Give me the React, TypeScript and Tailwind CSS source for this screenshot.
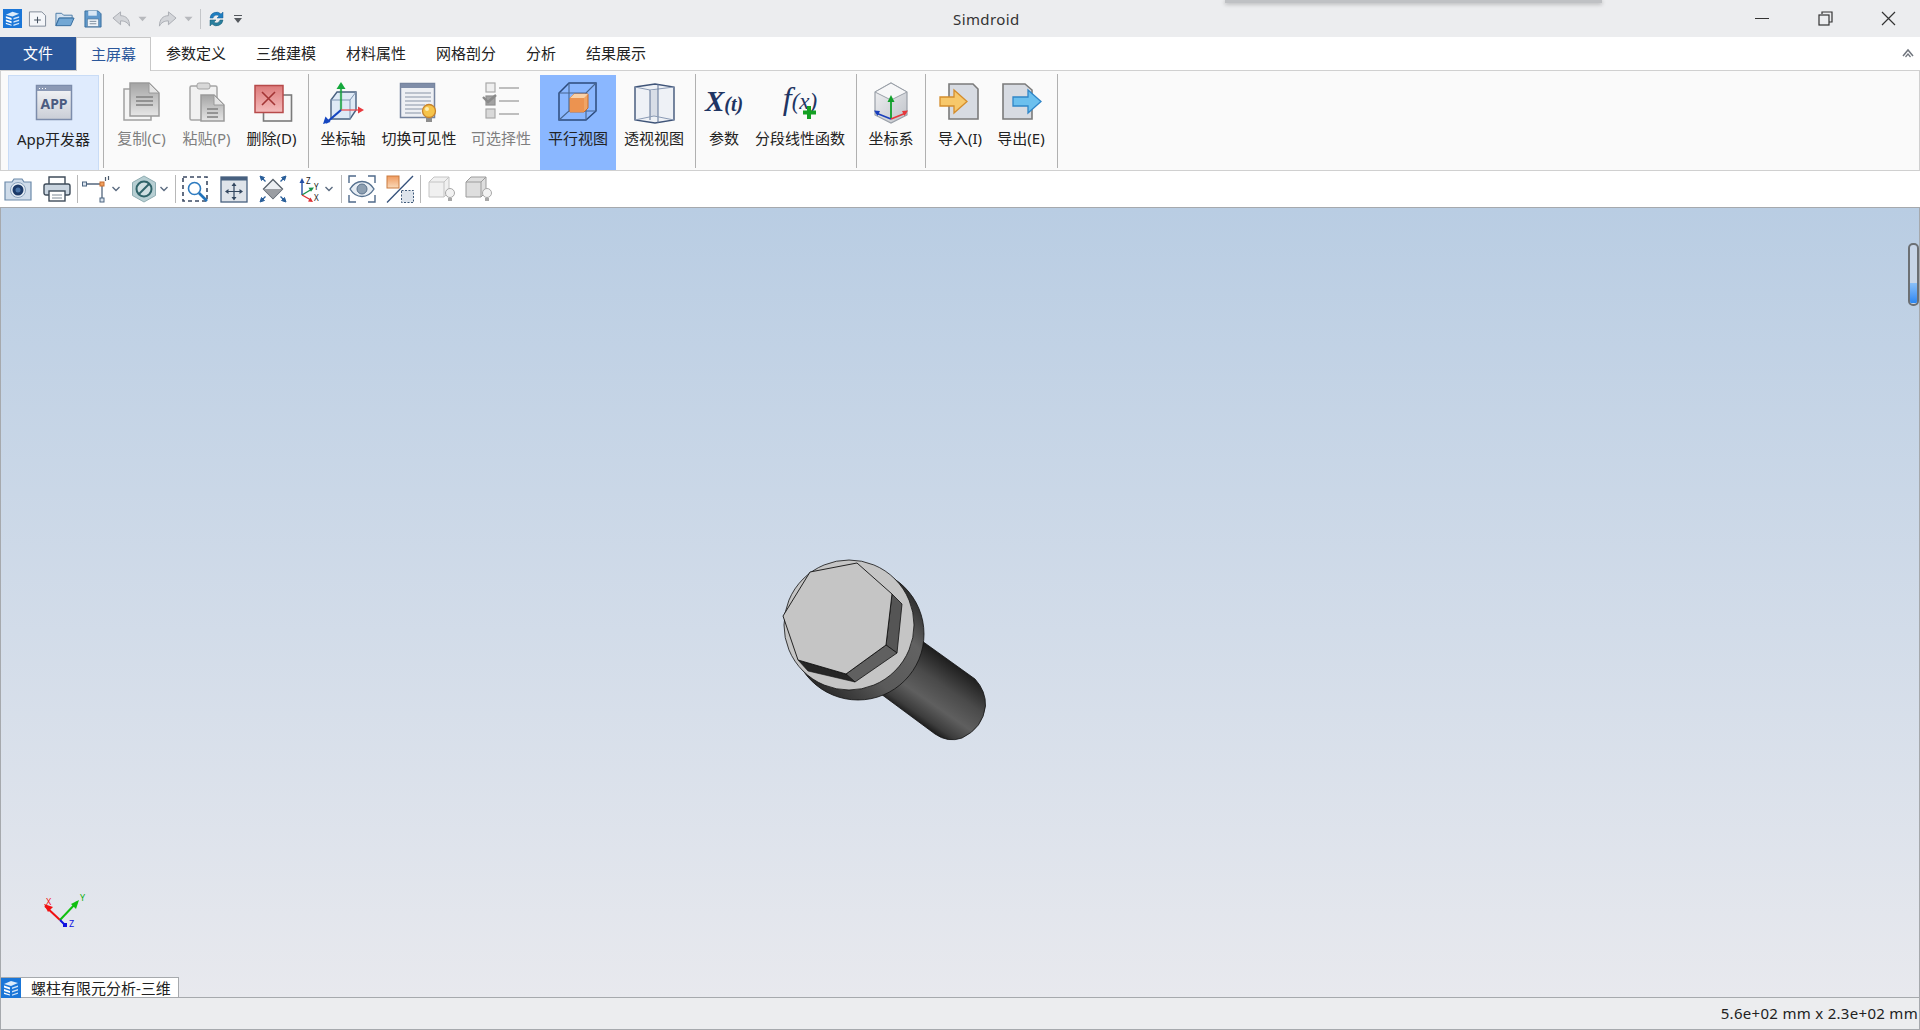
// App.tsx
import React from 'react';

const Logo: React.FC<{ size?: number }> = ({ size = 20 }) => (
  <svg width={size} height={size} viewBox="0 0 20 20">
    <rect width="20" height="20" fill="#1a76d8" />
    <path d="M3 6l7-3 7 2-7 3z" fill="#dcecfb" />
    <path d="M3 7.5l6 2v2l-6-2zM3 11l6 2v2l-6-2zM3 14.5l6 2v1l-6-1.6z" fill="#fff" />
    <path d="M11 9.5l6-2v1.6l-6 2zM11 13l6-2v1.6l-6 2zM11 16.4l6-2v1.4l-6 2z" fill="#cfe4fa" />
  </svg>
);

const Chevron: React.FC = () => (
  <svg width="10" height="8" viewBox="0 0 10 8">
    <path d="M1.5 2L5 5.5 8.5 2" fill="none" stroke="#5b6b80" strokeWidth="1.4" />
  </svg>
);

/* ---- quick access icons ---- */
const QatNew = () => (
  <svg width="20" height="20" viewBox="0 0 20 20">
    <path d="M1.5 2.5h13l4 4v11h-17z" fill="#f4f6f9" stroke="#7d8796" />
    <path d="M10 7.5v7M6.5 11h7" stroke="#44505f" strokeWidth="1.1" />
  </svg>
);
const QatOpen = () => (
  <svg width="21" height="20" viewBox="0 0 21 20">
    <path d="M1 4h6l2 2h9v3H4l-3 8z" fill="#d5e3f1" stroke="#4a7aa6" />
    <path d="M1 17l3.5-8H20l-3.5 8z" fill="#72a7d4" stroke="#356c9e" />
  </svg>
);
const QatSave = () => (
  <svg width="19" height="20" viewBox="0 0 19 20">
    <path d="M1 1.5h14l3 3v14H1z" fill="#5f98cb" stroke="#3a6f9f" />
    <rect x="4.500" y="1.500" width="9" height="5" fill="#d9e7f4" />
    <rect x="3.500" y="10" width="12" height="8" fill="#eef3f8" stroke="#54799b" strokeWidth=".7" />
    <path d="M6 12.5h7M6 15h7" stroke="#7a8a9b" />
  </svg>
);
const QatUndo: React.FC<{ flip?: boolean }> = ({ flip }) => (
  <svg width="20" height="18" viewBox="0 0 20 18" className={flip ? '-scale-x-100' : ''}>
    <path d="M1 8l8-6.5v4c6 0 9.500 4 9.500 11-2-4-5-5.500-9.500-5.500v4z" fill="#d3d5d9" stroke="#a9acb2" />
  </svg>
);
const QatDrop = () => (
  <svg width="10" height="6" viewBox="0 0 10 6">
    <path d="M0.500 0.500h9L5 5.500z" fill="#b7b9bd" />
  </svg>
);
const QatRefresh = () => (
  <svg width="17" height="18" viewBox="0 0 17 18">
    <path d="M2 8a6.500 6.500 0 0 1 11-4l2-2v6h-6l2-2a3.700 3.700 0 0 0-6 2z" fill="#1f7ec0" stroke="#1a5f94" strokeWidth=".5" />
    <path d="M15 10a6.500 6.500 0 0 1-11 4l-2 2v-6h6l-2 2a3.700 3.700 0 0 0 6-2z" fill="#2a7f9e" stroke="#1a5f74" strokeWidth=".5" />
  </svg>
);

/* ---- ribbon icons, all 44x44 ---- */
const AppIcon = () => (
  <svg width="44" height="44" viewBox="0 0 44 44">
    <defs>
      <linearGradient id="appg" x1="0" y1="0" x2="0" y2="1">
        <stop offset="0" stopColor="#f6f7f9" />
        <stop offset="1" stopColor="#c9cdd6" />
      </linearGradient>
    </defs>
    <rect x="4.500" y="4.500" width="35" height="34" fill="url(#appg)" stroke="#7c8cab" strokeWidth="1.500" />
    <rect x="5" y="5" width="34" height="5" fill="#8b99b5" />
    <path d="M7 7.500h1M10 7.500h1M13 7.500h1" stroke="#fff" />
    <text x="22" y="28" textAnchor="middle" fontSize="14" fontWeight="700" fill="#4b5b80" fontFamily="'Noto Sans',sans-serif">APP</text>
  </svg>
);
const Sheet: React.FC<{ x: number; y: number; w: number; h: number; id: string }> = ({ x, y, w, h, id }) => (
  <g>
    <defs>
      <linearGradient id={id} x1="0" y1="0" x2="0" y2="1">
        <stop offset="0" stopColor="#a4a4a4" />
        <stop offset="1" stopColor="#e6e6e6" />
      </linearGradient>
    </defs>
    <path d={`M${x} ${y}h${w - 10}l10 10v${h - 10}h-${w}z`} fill={`url(#${id})`} stroke="#9a9a9a" strokeWidth="1.500" />
    <path d={`M${x + w - 10} ${y}v10h10z`} fill="#e4e4e4" stroke="#9a9a9a" />
    <path d={`M${x + 6} ${y + 14}h${w - 12}M${x + 6} ${y + 18}h${w - 12}M${x + 6} ${y + 22}h${w - 12}`} stroke="#808080" strokeWidth="1.300" />
  </g>
);
const CopyIcon = () => (
  <svg width="44" height="44" viewBox="0 0 44 44">
    <rect x="4" y="9" width="27" height="31" fill="#f4f4f4" stroke="#a0a0a0" strokeWidth="1.500" />
    <Sheet x={10} y={3} w={29} h={33} id="copys" />
  </svg>
);
const PasteIcon = () => (
  <svg width="44" height="44" viewBox="0 0 44 44">
    <rect x="5" y="6" width="27" height="34" rx="1.500" fill="#f1f1f1" stroke="#a5a5a5" strokeWidth="1.500" />
    <rect x="12" y="3" width="13" height="6" rx="2" fill="#d8d8d8" stroke="#a3a3a3" />
    <Sheet x={16} y={15} w={23} h={26} id="pastes" />
  </svg>
);
const DeleteIcon = () => (
  <svg width="44" height="44" viewBox="0 0 44 44">
    <rect x="13.500" y="15" width="28" height="26" fill="#f6f6f6" stroke="#7b7b7b" strokeWidth="1.600" />
    <defs>
      <linearGradient id="delg" x1="0" y1="0" x2="0" y2="1">
        <stop offset="0" stopColor="#dc7a7a" />
        <stop offset="1" stopColor="#f4bcbc" />
      </linearGradient>
    </defs>
    <rect x="5" y="5.500" width="28" height="27" fill="url(#delg)" stroke="#b74a4a" strokeWidth="1.500" />
    <path d="M12 12l13 13M25 12L12 25" stroke="#a33535" strokeWidth="1.600" />
  </svg>
);
const AxesIcon = () => (
  <svg width="44" height="44" viewBox="0 0 44 44">
    <path d="M10 20l6-8h19v18l-6 9H10z" fill="#dfeaf6" stroke="#48607f" strokeWidth="1.400" />
    <path d="M10 20h19v19M29 20l6-8" fill="none" stroke="#7f95b2" />
    <path d="M20 30v-26" stroke="#19a23e" strokeWidth="2.200" opacity=".8" />
    <path d="M20 2l-4.500 7h9z" fill="#14a83c" />
    <path d="M20 30h18" stroke="#e9494e" strokeWidth="1.800" opacity=".7" />
    <path d="M43 30l-6-3.500v7z" fill="#e9393e" />
    <path d="M20 30L5 43" stroke="#1546c0" strokeWidth="2.200" />
    <path d="M2 44l2.500-7.500 5 5.500z" fill="#1546c0" />
  </svg>
);
const VisibilityIcon = () => (
  <svg width="44" height="44" viewBox="0 0 44 44">
    <rect x="3.500" y="3.500" width="34" height="34" fill="#eef0f4" stroke="#76849e" strokeWidth="1.500" />
    <rect x="4" y="4" width="33" height="4" fill="#7f8da8" />
    <path d="M8 13h26M8 17h26M8 21h26M8 25h20M8 29h18M8 33h16" stroke="#aab2c0" strokeWidth="1.300" />
    <path d="M29 37h6v5h-6z" fill="#8d8d8d" />
    <circle cx="32" cy="31" r="6.500" fill="#f6c44a" stroke="#c8832b" strokeWidth="1.300" />
    <circle cx="30" cy="29" r="2" fill="#fdeeb0" />
  </svg>
);
const SelectIcon = () => (
  <svg width="44" height="44" viewBox="0 0 44 44">
    <rect x="7" y="3" width="9" height="9" fill="#efefef" stroke="#a8a8a8" strokeWidth="1.200" />
    <rect x="7" y="16" width="9" height="9" fill="#a2a2a2" stroke="#909090" strokeWidth="1.200" />
    <rect x="7" y="29" width="9" height="9" fill="#d9d9d9" stroke="#a8a8a8" strokeWidth="1.200" />
    <path d="M4 17l5 5 8-7" fill="none" stroke="#8a8a8a" strokeWidth="2.400" />
    <path d="M20 8h20M20 21h20M20 34h20" stroke="#aaaaaa" strokeWidth="1.500" />
  </svg>
);
const ParallelIcon = () => (
  <svg width="44" height="44" viewBox="0 0 44 44">
    <path d="M3 13l10-10h27v28L30 40H3z" fill="none" stroke="#2c4b7c" strokeWidth="1.500" />
    <path d="M3 13h27v27M30 13L40 3M3 40l10-9V3M13 31h27" fill="none" stroke="#47658f" strokeWidth="1.100" />
    <path d="M14 18l4-4h14v14l-4 4H14z" fill="#f0a465" stroke="#c96e2b" />
    <path d="M14 18h14v14H14z" fill="#ec9350" />
    <path d="M14 18l4-4h14l-4 4z" fill="#f9d1a8" />
  </svg>
);
const PerspectiveIcon = () => (
  <svg width="44" height="44" viewBox="0 0 44 44">
    <path d="M3 7l20-3 19 3v33l-19 3-20-3z" fill="#eef1f6" stroke="#3f5478" strokeWidth="1.400" />
    <path d="M3 7l15 3 24-3" fill="none" stroke="#8a9ab4" />
    <path d="M18 10h8v26h-8z" fill="#d8dde7" />
    <path d="M26 4v39M18 10v30" stroke="#5d7193" strokeWidth="1" />
    <path d="M3 40l19-4 20 4" fill="none" stroke="#8a9ab4" />
  </svg>
);
const XtIcon = () => (
  <svg width="44" height="44" viewBox="0 0 44 44">
    <text x="22" y="31" textAnchor="middle" fontFamily="'Liberation Serif',serif" fontStyle="italic" fontWeight="700" fill="#1f3563">
      <tspan fontSize="29">X</tspan>
      <tspan fontSize="20">(t)</tspan>
    </text>
  </svg>
);
const FxIcon = () => (
  <svg width="44" height="44" viewBox="0 0 44 44">
    <text x="22" y="29" textAnchor="middle" fontFamily="'Liberation Serif',serif" fontStyle="italic" fill="#1f3563">
      <tspan fontSize="32">f</tspan>
      <tspan fontSize="23">(x)</tspan>
    </text>
    <path d="M31 26v13M25 32.500h13" stroke="#14a023" strokeWidth="4" />
  </svg>
);
const CoordIcon = () => (
  <svg width="44" height="44" viewBox="0 0 44 44">
    <defs>
      <linearGradient id="cogl" x1="0" y1="0" x2="1" y2="1">
        <stop offset="0" stopColor="#f2f2f4" />
        <stop offset="1" stopColor="#bfc3c9" />
      </linearGradient>
    </defs>
    <path d="M22 3l16 9v23l-16 8-16-8V12z" fill="url(#cogl)" stroke="#9aa0a8" strokeWidth="1.200" />
    <path d="M6 12l16 8 16-8-16-9z" fill="#f7f7f8" stroke="#9aa0a8" />
    <path d="M22 39V20" stroke="#10a02a" strokeWidth="1.800" />
    <path d="M22 15l-3.500 7h7z" fill="#10a02a" />
    <path d="M22 39l-15-6" stroke="#1a3fbb" strokeWidth="1.800" />
    <path d="M5 30.500l6 .5-2.500 5z" fill="#1a3fbb" />
    <path d="M22 39l15-6" stroke="#e5383c" strokeWidth="1.800" />
    <path d="M39 30.500l-6 .5 2.500 5z" fill="#e5383c" />
  </svg>
);
const ImportIcon = () => (
  <svg width="44" height="44" viewBox="0 0 44 44">
    <path d="M11 4h24l5 5v30H11z" fill="#d7dbe2" stroke="#7b7b7b" strokeWidth="1.600" />
    <path d="M2 17h14v-7l13 11.500L16 33v-7H2z" fill="#f7c86b" stroke="#d48d2c" strokeWidth="1.300" />
  </svg>
);
const ExportIcon = () => (
  <svg width="44" height="44" viewBox="0 0 44 44">
    <path d="M4 4h22l7 6v29H4z" fill="#d7dbe2" stroke="#7b7b7b" strokeWidth="1.600" />
    <path d="M14 17h15v-7l13 11.500L29 33v-7H14z" fill="#6cc0ee" stroke="#2f86c8" strokeWidth="1.300" />
  </svg>
);

/* ---- view toolbar icons ---- */
const CameraIcon = () => (
  <svg width="28" height="28" viewBox="0 0 28 28">
    <path d="M1 7h7l2-3h8l2 3h7v18H1z" fill="#cfdcea" stroke="#6c8aaa" strokeWidth="1.200" />
    <circle cx="14" cy="15" r="7.500" fill="#e7eef5" stroke="#8aa2bc" />
    <circle cx="14" cy="15" r="5.500" fill="#1c3a68" />
    <circle cx="14" cy="15" r="2.500" fill="#4a74a8" />
  </svg>
);
const PrinterIcon = () => (
  <svg width="28" height="28" viewBox="0 0 28 28">
    <path d="M6 9V2h16v7" fill="#fff" stroke="#3f4c5a" strokeWidth="1.400" />
    <rect x="1" y="9" width="26" height="11" rx="2" fill="#cad5e0" stroke="#3f4c5a" strokeWidth="1.400" />
    <rect x="6" y="16" width="16" height="10" fill="#fff" stroke="#3f4c5a" strokeWidth="1.400" />
    <path d="M9 20h10M9 23h10" stroke="#7f8a96" />
  </svg>
);
const PickIcon = () => (
  <svg width="30" height="28" viewBox="0 0 30 28">
    <path d="M5 9h17M21 9v16" stroke="#54677d" strokeWidth="1.300" />
    <rect x="1.500" y="7" width="4" height="4" fill="#dbe4ee" stroke="#4b6480" />
    <rect x="19" y="23" width="4" height="4" fill="#dbe4ee" stroke="#4b6480" />
    <rect x="19" y="7" width="4" height="4" fill="#f0a060" stroke="#c76d2d" />
    <path d="M24.500 2v4M27.500 1v4" stroke="#4b5a6c" strokeWidth="1.200" />
  </svg>
);
const HexIcon = () => (
  <svg width="26" height="28" viewBox="0 0 26 28">
    <path d="M13 1l11.500 6.500v13L13 27 1.500 20.500v-13z" fill="#b7cfd3" stroke="#8fadb2" />
    <circle cx="13" cy="14" r="7.500" fill="#cfdfe2" stroke="#2f6369" strokeWidth="2" />
    <path d="M8 19L18 9" stroke="#2f6369" strokeWidth="2" />
  </svg>
);
const ZoomBoxIcon = () => (
  <svg width="28" height="28" viewBox="0 0 28 28">
    <rect x="1" y="2" width="24" height="24" fill="none" stroke="#3b4a63" strokeWidth="1.600" strokeDasharray="4 3" />
    <circle cx="12.500" cy="13.500" r="6" fill="#fff" stroke="#2d7bc0" strokeWidth="1.600" />
    <path d="M17 18l8 8" stroke="#2173bb" strokeWidth="2.600" />
  </svg>
);
const FitIcon = () => (
  <svg width="28" height="28" viewBox="0 0 28 28">
    <rect x="1" y="2" width="26" height="25" fill="#dfe4ea" stroke="#47607f" strokeWidth="1.300" />
    <rect x="1" y="2" width="26" height="3.500" fill="#47607f" />
    <path d="M14 9v15M6.500 16.500h15" stroke="#33475f" strokeWidth="1.200" />
    <path d="M14 7.500l-2.500 3.500h5zM14 25.500l-2.500-3.500h5zM5 16.500l3.500-2.500v5zM23 16.500l-3.500-2.500v5z" fill="#33475f" />
  </svg>
);
const DiamondIcon = () => (
  <svg width="28" height="28" viewBox="0 0 28 28">
    <path d="M14 4.500L23.500 14 14 23.500 4.500 14z" fill="#eceff2" stroke="#57606a" strokeWidth="1.300" />
    <path d="M14 14l9.500 0L14 23.500 4.500 14z" fill="#9a9da2" />
    <path d="M1 1l4.500 1.500L2.500 5.500zM27 1l-4.500 1.500 3 3zM1 27l4.500-1.500-3-3zM27 27l-4.500-1.500 3-3z" fill="#2a5f9a" stroke="#2a5f9a" />
    <path d="M2.500 2.500l4 4M25.500 2.500l-4 4M2.500 25.500l4-4M25.500 25.500l-4-4" stroke="#2a5f9a" strokeWidth="1.300" />
  </svg>
);
const TriadIcon = () => (
  <svg width="26" height="30" viewBox="0 0 26 30">
    <path d="M6 21V7" stroke="#234ea6" strokeWidth="1.400" />
    <path d="M6 4L3.500 9h5z" fill="#234ea6" />
    <path d="M6 21l10-6" stroke="#17904a" strokeWidth="1.400" />
    <path d="M18 13.500l-5.500.3 2.500 4z" fill="#17904a" />
    <path d="M6 21l9 5" stroke="#dd2f33" strokeWidth="1.400" />
    <path d="M17 28l-2.500-4.500-2.500 4z" fill="#dd2f33" />
    <text x="10" y="10" fontSize="8" fill="#222" fontFamily="'Noto Sans',sans-serif">Z</text>
    <text x="18" y="16" fontSize="8" fill="#222" fontFamily="'Noto Sans',sans-serif">Y</text>
    <text x="18" y="27" fontSize="8" fill="#222" fontFamily="'Noto Sans',sans-serif">X</text>
  </svg>
);
const EyeIcon = () => (
  <svg width="28" height="28" viewBox="0 0 28 28">
    <path d="M1 8V1h7M20 1h7v7M1 20v7h7M20 27h7v-7" fill="none" stroke="#4f6a8a" strokeWidth="1.400" />
    <path d="M2 14c4-6.500 8-7.500 12-7.500S22 7.500 26 14c-4 6.500-8 7.500-12 7.500S6 20.500 2 14z" fill="#e7edf3" stroke="#56718f" strokeWidth="1.400" />
    <circle cx="14" cy="14" r="5" fill="#8d9fb1" stroke="#5a728c" />
  </svg>
);
const HalfIcon = () => (
  <svg width="28" height="28" viewBox="0 0 28 28">
    <defs>
      <linearGradient id="halfg" x1="0" y1="0" x2="0" y2="1">
        <stop offset="0" stopColor="#f09a5e" />
        <stop offset="1" stopColor="#f9d9b9" />
      </linearGradient>
    </defs>
    <rect x="1" y="1" width="12" height="12" fill="url(#halfg)" stroke="#c97a3f" />
    <rect x="15.500" y="15.500" width="12" height="12" fill="#dde4ec" stroke="#3f5a7a" strokeDasharray="2 1.500" />
    <path d="M1 27.500L27 1" stroke="#33507a" strokeWidth="1.300" />
  </svg>
);
const CubeBulbIcon: React.FC<{ shade: string; edge: string }> = ({ shade, edge }) => (
  <svg width="28" height="28" viewBox="0 0 28 28">
    <path d="M1 7l5-5h15v15l-5 5H1z" fill={shade} stroke={edge} />
    <path d="M1 7h15v15M16 7l5-5" fill="none" stroke={edge} />
    <circle cx="22" cy="18" r="4.500" fill="#f2f2f2" stroke="#a8a8a8" />
    <path d="M20 23h4v3h-4z" fill="#a8a8a8" />
  </svg>
);

const Sep: React.FC<{ className?: string }> = ({ className }) => (
  <div className={'h-[94px] w-px self-center bg-[#b0b0b0] ' + (className ?? '')} />
);

type RibbonItem = { label: string; w: string; icon: React.ReactNode; off?: boolean; active?: boolean };

const RibbonButton: React.FC<RibbonItem> = ({ label, w, icon, off, active }) => (
  <button
    type="button"
    className={
      'flex h-full shrink-0 flex-col items-center pt-[5px] ' +
      w +
      (active ? ' bg-[#8ab7ff]' : '')
    }
  >
    <span className="flex h-[44px] items-center justify-center">{icon}</span>
    <span className={'mt-[4px] whitespace-nowrap text-[15px] leading-[20px] ' + (off ? 'text-[#7f7f7f]' : 'text-[#222]')}>
      {label}
    </span>
  </button>
);

const tabs = [
  { label: '参数定义', w: 'w-[90px]' },
  { label: '三维建模', w: 'w-[90px]' },
  { label: '材料属性', w: 'w-[90px]' },
  { label: '网格剖分', w: 'w-[90px]' },
  { label: '分析', w: 'w-[60px]' },
  { label: '结果展示', w: 'w-[90px]' },
];

const ToolSep: React.FC<{ className: string }> = ({ className }) => (
  <div className={'h-[28px] w-px bg-[#b8b8b8] ' + className} />
);

const Bolt = () => (
  <svg width="270" height="240" viewBox="0 0 270 240" className="absolute left-[739px] top-[323px]">
    <defs>
      <linearGradient id="shaft" gradientUnits="userSpaceOnUse" x1="208" y1="128" x2="168" y2="186">
        <stop offset="0" stopColor="#1d1d1d" />
        <stop offset="0.35" stopColor="#4a4a4a" />
        <stop offset="0.65" stopColor="#5f5f5f" />
        <stop offset="0.88" stopColor="#3c3c3c" />
        <stop offset="1" stopColor="#161616" />
      </linearGradient>
      <linearGradient id="flange" gradientUnits="userSpaceOnUse" x1="172" y1="60" x2="70" y2="165">
        <stop offset="0" stopColor="#2a2a2a" />
        <stop offset="0.25" stopColor="#626262" />
        <stop offset="0.6" stopColor="#5a5a5a" />
        <stop offset="1" stopColor="#1e1e1e" />
      </linearGradient>
    </defs>
    <path
      d="M182 110L235 148Q246 160 245.500 175Q243 197 222 207Q208 212 195 203L141 163Z"
      fill="url(#shaft)"
      stroke="#111"
      strokeWidth=".8"
    />
    <circle cx="118" cy="103" r="66" fill="url(#flange)" stroke="#111" strokeWidth=".8" />
    <circle cx="109" cy="94" r="65" fill="#c5c5c5" stroke="#111" strokeWidth=".8" />
    <path d="M152 63l10 10-5 49-11-8z" fill="#555" stroke="#111" strokeWidth=".8" />
    <path d="M146 114l11 8-42 29-9-8z" fill="#606060" stroke="#111" strokeWidth=".8" />
    <path d="M58 129l48 14 9 8-47-11z" fill="#262626" stroke="#111" strokeWidth=".6" />
    <path d="M70 41l47-9 35 31-6 51-40 29-48-14-15-44z" fill="#c5c5c5" stroke="#111" strokeWidth=".9" />
  </svg>
);

const Triad = () => (
  <svg width="70" height="50" viewBox="0 0 70 50" className="absolute left-[30px] top-[682px]" fontFamily="'Noto Sans',sans-serif">
    <path d="M29 30L14 16" stroke="#f01010" strokeWidth="2" />
    <path d="M13 14l9 3-5 5z" fill="#f01010" />
    <path d="M29 30L46 12" stroke="#10c010" strokeWidth="2" />
    <path d="M48 10l-3 9-5-5z" fill="#10c010" />
    <path d="M29 30l5 5" stroke="#1010e0" strokeWidth="2" />
    <rect x="32" y="33" width="4" height="4" fill="#1010e0" />
    <text x="15" y="15" fontSize="9" fill="#f01010">X</text>
    <text x="49" y="11" fontSize="9" fill="#10b010">Y</text>
    <text x="38" y="37" fontSize="9" fill="#1010e0">Z</text>
  </svg>
);

export default function App() {
  return (
    <main className="relative flex h-screen w-full flex-col overflow-hidden bg-white font-['Noto_Sans','Noto_Sans_CJK_SC',sans-serif] text-[#222]">
      {/* Title bar */}
      <header className="relative flex h-[37px] shrink-0 items-center bg-[#ecedef]">
        <div className="absolute left-[1225px] top-0 h-[3px] w-[377px] bg-[#bfc1c4] shadow-[0_1px_4px_rgba(0,0,0,0.3)]" />
        <div className="flex items-center pl-[3px]">
          <Logo size={19} />
          <span className="ml-[6px] flex w-[19px] justify-center"><QatNew /></span>
          <span className="ml-[8px] flex w-[20px] justify-center"><QatOpen /></span>
          <span className="ml-[9px] flex w-[18px] justify-center"><QatSave /></span>
          <span className="ml-[10px] flex w-[19px] justify-center"><QatUndo /></span>
          <span className="ml-[7px] flex w-[9px] justify-center"><QatDrop /></span>
          <span className="ml-[11px] flex w-[19px] justify-center"><QatUndo flip /></span>
          <span className="ml-[7px] flex w-[9px] justify-center"><QatDrop /></span>
          <div className="ml-[7px] h-[20px] w-px bg-[#c4c6c9]" />
          <span className="ml-[7px] flex w-[17px] justify-center"><QatRefresh /></span>
          <span className="ml-[8px] flex w-[10px] flex-col items-center gap-[2px]">
            <span className="h-px w-[8px] bg-[#55595e]" />
            <span className="h-0 w-0 border-x-[4px] border-t-[5px] border-x-transparent border-t-[#55595e]" />
          </span>
        </div>
        <span className="absolute left-[953px] top-[8px] text-[15px] leading-[22px] tracking-[0.4px] text-[#333]">Simdroid</span>
        <div className="ml-auto flex h-full items-center">
          <button type="button" className="flex h-full w-[63px] items-center justify-center pr-[1px]">
            <span className="h-[1.500px] w-[14px] bg-[#333]" />
          </button>
          <button type="button" className="flex h-full w-[63px] items-center justify-center pr-[1px]">
            <svg width="15" height="15" viewBox="0 0 15 15">
              <path d="M4 3V1h10v10h-3" fill="none" stroke="#333" strokeWidth="1.200" />
              <rect x="1" y="4" width="10" height="10" fill="none" stroke="#333" strokeWidth="1.200" />
            </svg>
          </button>
          <button type="button" className="flex h-full w-[63px] items-center justify-center">
            <svg width="15" height="15" viewBox="0 0 15 15">
              <path d="M1 1l13 13M14 1L1 14" stroke="#333" strokeWidth="1.200" />
            </svg>
          </button>
        </div>
      </header>

      {/* Tabs */}
      <nav className="relative z-10 flex h-[33px] shrink-0 bg-white text-[15px]">
        <div className="flex w-[76px] items-center justify-center bg-[#2b579a] text-white">文件</div>
        <div className="-mb-px flex h-[34px] w-[75px] items-center justify-center border-x border-t border-[#c8c8c8] bg-[#fafafa] text-[#2b579a]">主屏幕</div>
        {tabs.map(t => (
          <div key={t.label} className={'flex items-center justify-center text-[#222] ' + t.w}>{t.label}</div>
        ))}
        <svg width="12" height="10" viewBox="0 0 12 10" className="ml-auto mr-[6px] mt-[11px]">
          <path d="M1 8l5-6 5 6" fill="none" stroke="#71767e" strokeWidth="1.500" />
          <path d="M3.500 9L6 6l2.500 3" fill="none" stroke="#71767e" strokeWidth="1.200" />
        </svg>
      </nav>

      {/* Ribbon */}
      <section className="flex h-[101px] shrink-0 items-stretch border border-[#d0d0d0] bg-[#fafafa] pt-[4px]">
        <div className="ml-[7px] shrink-0">
          <div className="h-full w-[91px] border border-b-0 border-[#c9dcf6] bg-[#dfebfd]">
            <RibbonButton label="App开发器" w="w-full" icon={<AppIcon />} />
          </div>
        </div>
        <Sep className="ml-[4px] -mt-[4px]" />
        <div className="ml-[5px] flex">
          <RibbonButton label="复制(C)" w="w-[65px]" off icon={<CopyIcon />} />
          <RibbonButton label="粘贴(P)" w="w-[65px]" off icon={<PasteIcon />} />
          <RibbonButton label="删除(D)" w="w-[65px]" icon={<DeleteIcon />} />
        </div>
        <Sep className="ml-[4px] -mt-[4px]" />
        <div className="ml-px flex">
          <RibbonButton label="坐标轴" w="w-[66px]" icon={<AxesIcon />} />
          <RibbonButton label="切换可见性" w="w-[86px]" icon={<VisibilityIcon />} />
          <RibbonButton label="可选择性" w="w-[78px]" off icon={<SelectIcon />} />
          <RibbonButton label="平行视图" w="w-[76px]" active icon={<ParallelIcon />} />
          <RibbonButton label="透视视图" w="w-[76px]" icon={<PerspectiveIcon />} />
        </div>
        <Sep className="ml-[3px] -mt-[4px]" />
        <div className="flex">
          <RibbonButton label="参数" w="w-[56px]" icon={<XtIcon />} />
          <RibbonButton label="分段线性函数" w="w-[96px]" icon={<FxIcon />} />
        </div>
        <Sep className="ml-[8px] -mt-[4px]" />
        <RibbonButton label="坐标系" w="w-[68px]" icon={<CoordIcon />} />
        <Sep className="-mt-[4px]" />
        <div className="ml-px flex">
          <RibbonButton label="导入(I)" w="w-[66px]" icon={<ImportIcon />} />
          <RibbonButton label="导出(E)" w="w-[56px]" icon={<ExportIcon />} />
        </div>
        <Sep className="ml-[8px] -mt-[4px]" />
      </section>

      {/* View toolbar */}
      <div className="flex h-[36px] shrink-0 items-center bg-white pl-[4px]">
        <CameraIcon />
        <span className="ml-[11px]"><PrinterIcon /></span>
        <ToolSep className="ml-[6px]" />
        <span className="ml-[3px]"><PickIcon /></span>
        <Chevron />
        <span className="ml-[10px]"><HexIcon /></span>
        <span className="ml-[2px]"><Chevron /></span>
        <ToolSep className="ml-[6px]" />
        <span className="ml-[6px]"><ZoomBoxIcon /></span>
        <span className="ml-[10px]"><FitIcon /></span>
        <span className="ml-[11px]"><DiamondIcon /></span>
        <span className="ml-[9px]"><TriadIcon /></span>
        <span className="ml-[2px]"><Chevron /></span>
        <ToolSep className="ml-[7px]" />
        <span className="ml-[6px]"><EyeIcon /></span>
        <span className="ml-[10px]"><HalfIcon /></span>
        <ToolSep className="ml-[6px]" />
        <span className="ml-[7px]"><CubeBulbIcon shade="#f0f0f0" edge="#c4c4c4" /></span>
        <span className="ml-[9px]"><CubeBulbIcon shade="#dedede" edge="#9c9c9c" /></span>
      </div>

      {/* 3D viewport */}
      <div className="relative flex min-h-0 flex-1 flex-col justify-end border-x border-t border-[#a6a9ad] bg-gradient-to-b from-[#b9cde3] to-[#e8e9ee]">
        <Bolt />
        <Triad />
        <div className="absolute right-0 top-[35px] h-[63px] w-[11px] overflow-hidden rounded-[5px] border-2 border-[#6c7074] bg-[#c8d6e8]">
          <div className="absolute inset-x-0 bottom-[1px] h-[20px] bg-gradient-to-b from-[#8ac0f8] to-[#2a86f0]" />
        </div>
        <div className="flex h-[20px] w-[178px] items-center border-r border-t border-[#a6a9ad] bg-white">
          <Logo size={20} />
          <span className="ml-[10px] whitespace-nowrap text-[15px] leading-[20px]">螺柱有限元分析-三维</span>
        </div>
      </div>

      {/* Status bar */}
      <footer className="flex h-[33px] shrink-0 items-center justify-end border border-[#a6a9ad] bg-[#ecedef] pr-px text-[15px] tracking-[0.3px] text-[#222]">
        5.6e+02 mm x 2.3e+02 mm
      </footer>
    </main>
  );
}
